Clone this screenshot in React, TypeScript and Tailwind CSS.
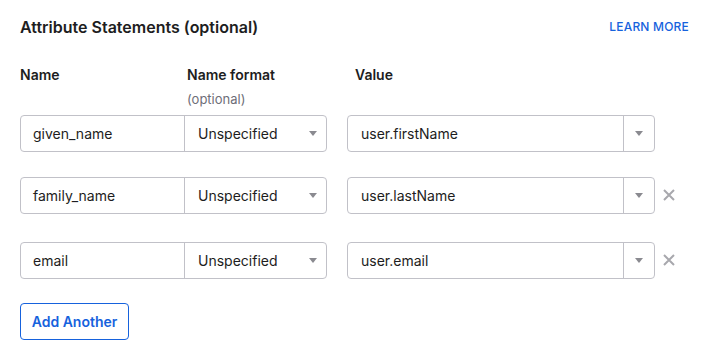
const rows = [
  { name: "given_name", format: "Unspecified", value: "user.firstName", removable: false },
  { name: "family_name", format: "Unspecified", value: "user.lastName", removable: true },
  { name: "email", format: "Unspecified", value: "user.email", removable: true },
];

const Caret = () => (
  <svg width="8" height="5" viewBox="0 0 8 5" className="fill-[#8a8a90]">
    <path d="M0 0h8L4 5z" />
  </svg>
);

const RemoveIcon = () => (
  <svg width="14" height="14" viewBox="0 0 14 14" className="stroke-[#a8a8ad]" strokeWidth="2" fill="none">
    <path d="M2 2l10 10M12 2L2 12" />
  </svg>
);

export default function App() {
  return (
    <div className="w-[708px] h-[363px] bg-white px-5 pt-[16px] font-['Inter',sans-serif] text-[#1d1d21]">
      {/* Header */}
      <div className="flex items-center justify-between h-[22px]">
        <h2 className="text-[16px] font-semibold">Attribute Statements (optional)</h2>
        <a className="text-[12px] font-medium tracking-[0.2px] text-[#1662dd] mr-[-1px]">LEARN MORE</a>
      </div>

      {/* Column headers */}
      <div className="flex mt-[26px] text-[14px] font-semibold">
        <div className="w-[167px]">Name</div>
        <div className="w-[168px]">Name format</div>
        <div>Value</div>
      </div>
      <div className="flex text-[13px] text-[#6e6e78] mt-[5px]">
        <div className="ml-[167px]">(optional)</div>
      </div>

      {/* Rows */}
      <div className="flex flex-col mt-[5px]">
        {rows.map((row, i) => (
          <div key={row.name} className={`flex items-center ${i === 0 ? "" : i === 1 ? "mt-[25px]" : "mt-[28px]"}`}>
            <div className="flex h-[37px] w-[307px] border border-[#c1c1c8] rounded-[4px]">
              <div className="w-[164px] flex items-center pl-[12px] text-[14px] border-r border-[#c1c1c8]">
                {row.name}
              </div>
              <div className="flex-1 flex items-center justify-between pl-[13px] pr-[9px] text-[14px]">
                <span>{row.format}</span>
                <Caret />
              </div>
            </div>
            <div className="ml-[20px] flex h-[37px] w-[308px] border border-[#c1c1c8] rounded-[4px]">
              <div className="w-[276px] flex items-center pl-[13px] text-[14px] border-r border-[#c1c1c8]">
                {row.value}
              </div>
              <div className="flex-1 flex items-center justify-center">
                <Caret />
              </div>
            </div>
            {row.removable && (
              <div className="ml-[7px] flex items-center">
                <RemoveIcon />
              </div>
            )}
          </div>
        ))}
      </div>

      <button className="mt-[24px] h-[37px] w-[109px] border border-[#1662dd] rounded-[4px] text-[14px] font-semibold text-[#1662dd]">
        Add Another
      </button>
    </div>
  );
}
